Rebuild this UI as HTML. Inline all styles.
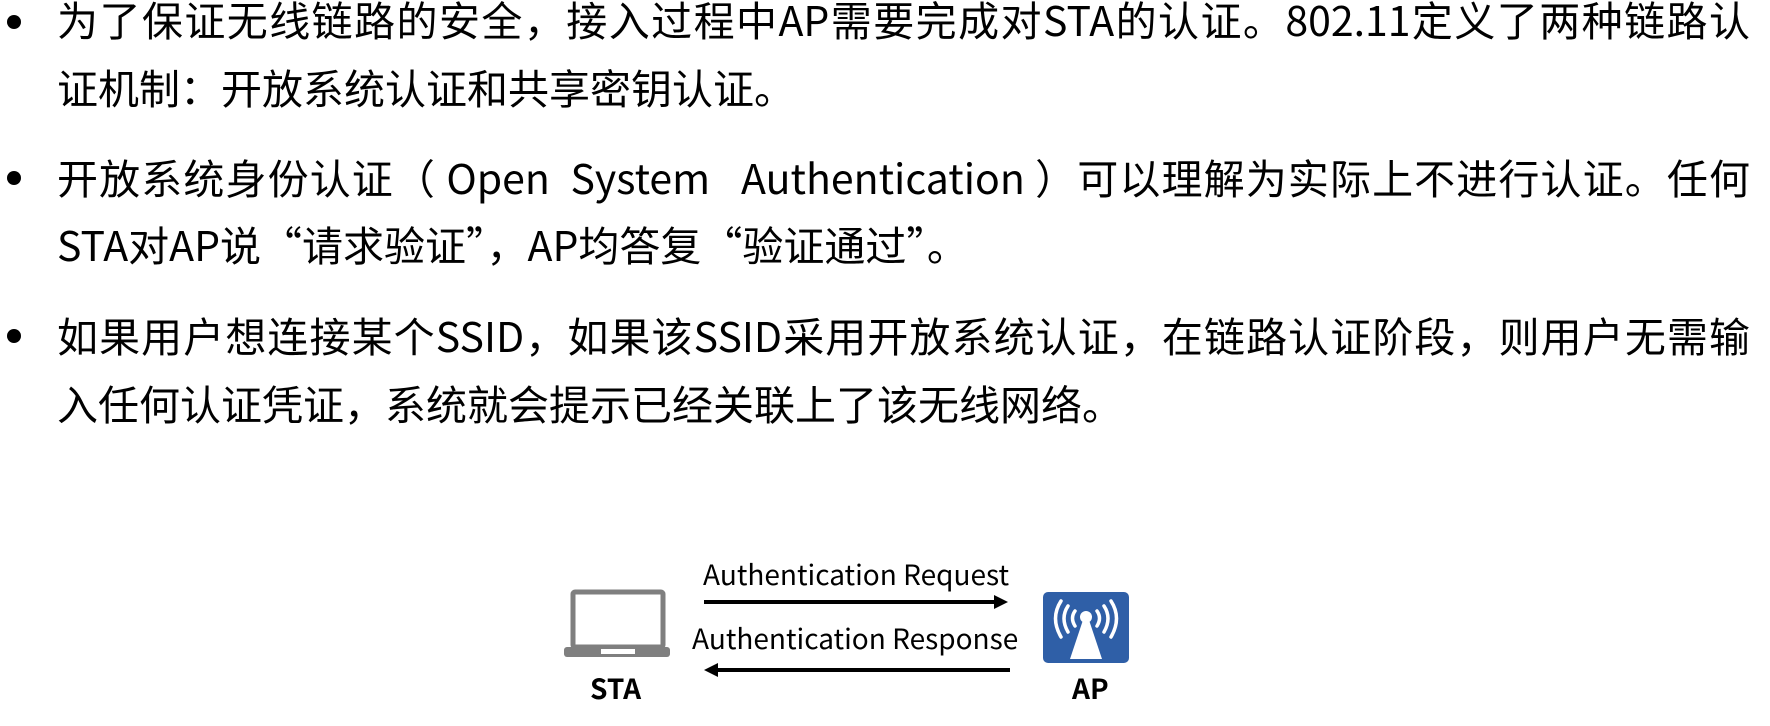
<!DOCTYPE html>
<html><head><meta charset="utf-8"><style>
html,body{margin:0;padding:0;background:#fff;}
body{width:1770px;height:726px;position:relative;overflow:hidden;font-family:"Noto Sans CJK SC","Liberation Sans",sans-serif;color:#000;}
.l{position:absolute;left:57px;width:1693px;font-size:41px;line-height:50px;white-space:nowrap;}
.j{text-align:justify;text-align-last:justify;white-space:normal;height:50px;overflow:visible;}
.b{position:absolute;left:7px;width:14px;height:14px;border-radius:50%;background:#000;}
.t{position:absolute;font-size:28px;line-height:32px;white-space:nowrap;}
.bt{position:absolute;font-size:28px;font-weight:bold;line-height:32px;}
</style></head><body>
<div class="b" style="top:15px"></div>
<div class="l j" style="top:-7px">为了保证无线链路的安全，接入过程中AP需要完成对STA的认证。802.11定义了两种链路认</div>
<div class="l" style="top:61px">证机制：开放系统认证和共享密钥认证。</div>
<div class="b" style="top:171px"></div>
<div class="l j" style="top:151px">开放系统身份认证（ Open &nbsp;System &nbsp;&nbsp;Authentication ）可以理解为实际上不进行认证。任何</div>
<div class="l" style="top:218px">STA对AP说“请求验证”，AP均答复“验证通过”。</div>
<div class="b" style="top:329px"></div>
<div class="l j" style="top:309px">如果用户想连接某个SSID，如果该SSID采用开放系统认证，在链路认证阶段，则用户无需输</div>
<div class="l" style="top:377px">入任何认证凭证，系统就会提示已经关联上了该无线网络。</div>

<svg style="position:absolute;left:0;top:0" width="1770" height="726">
<rect x="573" y="592" width="90" height="55" fill="none" stroke="#7f7f7f" stroke-width="5" rx="2"/>
<rect x="564" y="647" width="106" height="10" rx="3" fill="#7f7f7f"/>
<rect x="601" y="649" width="34" height="5" fill="#fff"/>
<line x1="704" y1="602" x2="996" y2="602" stroke="#000" stroke-width="4"/>
<polygon points="1008,602 994,595 994,609" fill="#000"/>
<line x1="716" y1="670" x2="1010" y2="670" stroke="#000" stroke-width="4"/>
<polygon points="704,670 718,663 718,677" fill="#000"/>
<rect x="1043" y="592" width="86" height="71" rx="5" fill="#2f5fa7"/>
<g fill="none" stroke="#fff" stroke-width="3.5" stroke-linecap="round">
<path d="M1061 601 Q1050 618 1061 637"/><path d="M1068 606 Q1060 618 1068 632"/><path d="M1075 611 Q1070 618 1075 626"/>
<path d="M1111 601 Q1122 618 1111 637"/><path d="M1104 606 Q1112 618 1104 632"/><path d="M1097 611 Q1102 618 1097 626"/>
</g>
<circle cx="1086" cy="617" r="6" fill="#fff"/>
<polygon points="1083,620 1089,620 1102,659 1070,659" fill="#fff"/>
</svg>
<div class="t" style="left:703px;top:558px">Authentication Request</div>
<div class="t" style="left:692px;top:622px">Authentication Response</div>
<div class="bt" style="left:590px;top:672px">STA</div>
<div class="bt" style="left:1072px;top:672px">AP</div>
</body></html>
